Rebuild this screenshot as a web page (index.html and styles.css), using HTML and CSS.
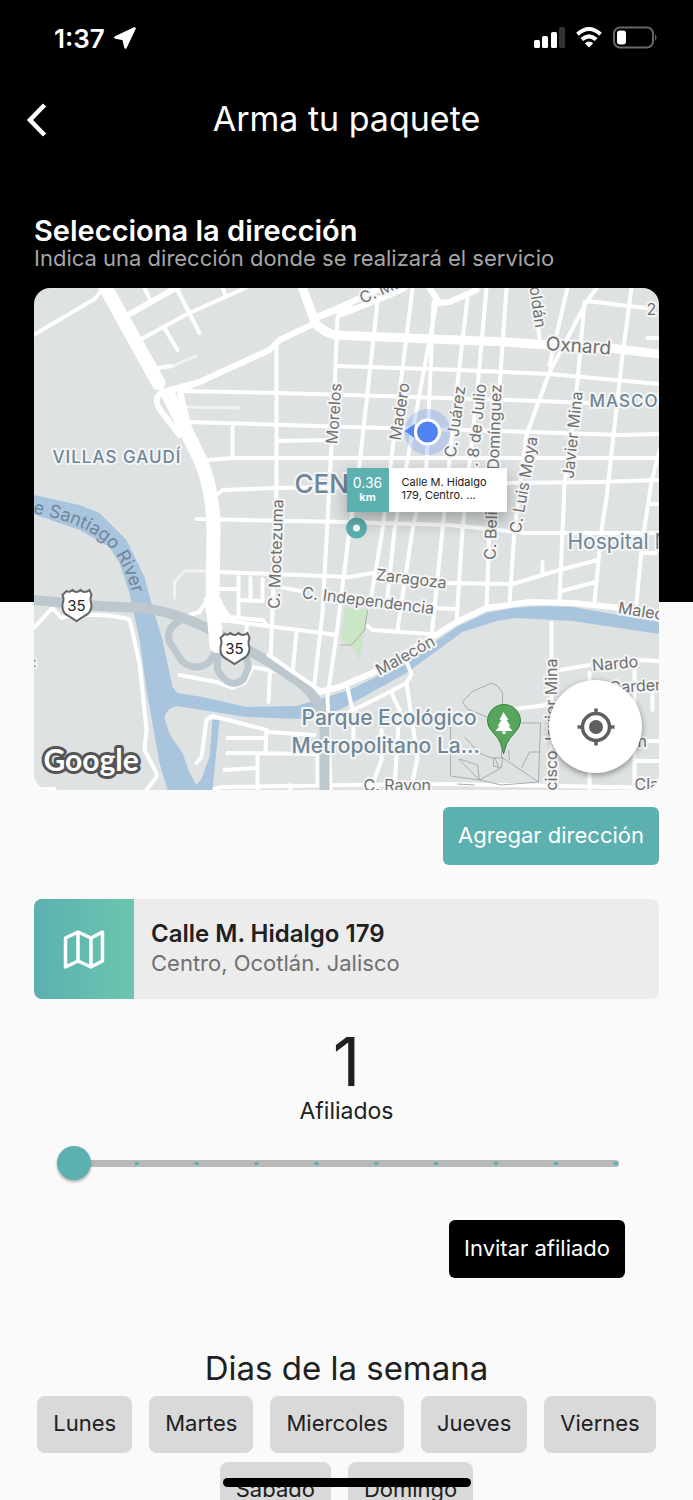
FILE: index.html
```html
<!DOCTYPE html>
<html lang="es">

<head>
    <meta charset="UTF-8">
    <meta name="viewport" content="width=device-width, initial-scale=1.0">
    <title>Arma tu paquete</title>
    <link rel="stylesheet" href="styles.css">
</head>

<body>

<div class="screen">
    <!-- Status bar -->
    <div class="status-bar">
        <div class="status-left">
            <span>1:37</span>
            <svg width="22" height="22" viewBox="0 0 22 22"><path d="M20.500 1.500L1.500 10.500 9.500 12 11.500 20.500Z" fill="#fff" stroke="#fff" stroke-width="2.500" stroke-linejoin="round"/></svg>
        </div>
        <svg class="status-icons" width="124" height="24" viewBox="0 0 124 24">
            <g fill="#fff">
                <rect x="0" y="14" width="6" height="8" rx="1.500"/>
                <rect x="8" y="10" width="6" height="12" rx="1.500"/>
                <rect x="17" y="6" width="6" height="16" rx="1.500"/>
                <rect x="25" y="1" width="6" height="21" rx="1.500" fill="#333"/>
                <path d="M55 21.500L50.800 17.200Q55 14 59.200 17.200Z"/>
            </g>
            <g fill="none" stroke="#fff" stroke-width="4">
                <path d="M43.500 8.200Q55-2.200 66.500 8.200"/>
                <path d="M47.800 13.500Q55 7.200 62.200 13.500"/>
            </g>
            <rect x="80" y="1.500" width="39" height="20" rx="6" fill="none" stroke="#666" stroke-width="2"/>
            <rect x="83" y="4.500" width="9" height="14" rx="3" fill="#fff"/>
            <path d="M121 8q3 3.500 0 7z" fill="#666"/>
        </svg>
    </div>

    <header class="header">
        <button class="back-button" aria-label="Volver">
            <svg width="22" height="34" viewBox="0 0 22 34"><path d="M18.500 2L4 17 18.500 32" fill="none" stroke="#fff" stroke-width="4.500"/></svg>
        </button>
        <h1>Arma tu paquete</h1>
    </header>

    <main class="content">
        <h2>Selecciona la dirección</h2>
        <p class="subtitle">Indica una dirección donde se realizará el servicio</p>

        <!-- Map -->
        <div class="map">
            <svg class="map-canvas" viewBox="34 288 626 502" preserveAspectRatio="xMidYMid slice">
                <rect x="34" y="288" width="626" height="502" fill="#dee2e3"/>
                <path fill="#cbe6c6" d="M345 607L368 610 365 630 360 660 352 645 342 640Z"/>
                <path fill="#a9c5dd" d="M34 495L80 505 100 513 127 540 145 577 153 607 163 640 173 687 178 693 203 697 247 707 297 706 350 690 407 662 457 627 487 613 513 608 543 606 573 607 660 622V634L573 621 517 618 497 621 463 632 407 673 340 710 300 719 247 717 177 706Q167 708 165 718L170 734 183 753 190 773 197 785 202 779 210 757 213 720H220L213 790H168L160 763 147 690 140 640 130 593 120 563 110 547 80 530 34 514Z"/>

                <!-- streets -->
                <g class="road">
                    <path d="M34 335L95 299 103 290M145 288L151 301M177 288L200 333M165 328L178 350M223 288L226 295M158 368L173 366M140 340L190 313 246 288"/>
                    <path d="M337 366L460 370 550 374 660 384M180 391L277 393 350 395 540 401 590 403M188 422L350 427 500 431 620 435 660 434M208 460L233 458H660M278 441L327 440M217 495L223 490 277 488 350 487M507 483L600 482 660 480M197 519L350 522 450 525 527 533H660M233 427V458"/>
                    <path d="M277 345V488L273 613 269 702M338 317L335 390 332 445 327 540 323 613 315 683M378 302L360 465 350 530 337 635 328 697 331 790"/>
                    <path d="M413 288L392 458 383 530 370 607M437 302L407 465 395 530 388 597M434 302L427 465 413 530 398 630M468 298L457 392 443 530 432 637M487 288L478 388 463 530 457 622M507 288L500 388 490 530 487 608"/>
                    <path d="M568 288L550 365M597 288L587 302 550 372 527 435 515 530 510 603M585 302L578 382 565 485 560 600M632 288L623 355 607 498 602 530 595 602M660 450L652 482 643 540 637 603M587 301L647 308M538 322L540 338M648 338H660M650 504H660M645 553H656"/>
                    <path d="M220 572L350 577 373 573M447 583L513 584 560 570 598 560M543 562V573M562 591L597 582M433 608L457 609M239 577V617M220 589H239M240 600L263 601M251 578V598M263 579V600M280 587L302 591M190 615L200 612 208 600M220 602L230 617 263 620 268 626M222 620L337 635M247 624V640M297 632L293 673M368 626L373 630 430 634"/>
                    <path d="M34 628L53 608 62 618 73 615H100Q126 617 130 620L133 632 140 663 147 730 145 750 157 773V777L147 790M180 675L217 682 233 688 245 683 253 667 280 672M197 763L202 757 207 720 213 716 267 730 266 752M268 732L315 735M228 738H266M228 753L318 754M225 770L257 768M258 755V790M215 789L223 787 350 785 450 784 660 788M291 785V790M318 754V784M34 789H55"/>
                    <path d="M348 688L353 710M407 662L412 674 407 683 390 692 340 717M407 683L418 757 412 787M392 693L400 710 395 787M354 724V744M382 730V760L372 787M552 623V790M560 670L590 665M637 660L660 661M507 710L547 705M635 667V790M590 673V790M653 692V710M645 741H660M635 761H660"/>
                </g>
                <g class="road-minor">
                    <path d="M173 366L197 356M185 407L240 408M175 598V582L185 571 220 571"/>
                </g>
                <g class="road-medium">
                    <path d="M125 317L180 286M350 305L317 318M317 317L350 303 385 286M340 315L390 295 405 288M430 288L440 303 450 302 477 290M316 323L280 340 270 350 200 382 163 392Q153 398 160 409L180 435M200 382L180 390 190 430M172 392L190 430"/>
                    <path d="M280 672L320 692 340 687 373 673 433 637 457 622 487 608 530 602 573 603 623 608 660 618"/>
                </g>
                <path class="highway" d="M34 600L100 606 143 608Q178 612 217 633L263 658 297 680Q325 700 325 730V790"/>
                <g class="ramp">
                    <path d="M180 621Q166 628 170 642L183 662Q197 672 210 662L218 648V670Q230 691 244 679L249 667 246 653"/>
                </g>
                <path class="road-large" d="M303 288L316 323Q322 331 335 335L507 342 547 345 610 348 660 354"/>
                <path class="road-medium" d="M207 600L212 620M219 600L225 620"/>
                <path class="avenue" d="M103 282L159 383"/>
                <path class="avenue" d="M169 395L200 458Q214 490 214 530L213 600 217 646"/>
                <path class="road" d="M269 655L295 673 320 690"/>

                <!-- footpaths of the park -->
                <g class="footpath">
                    <path d="M463 702L472 692 492 683 498 686 503 693V706M463 702L468 709 490 718M451 724V776L480 780 502 785 539 782 541 723H520M465 737L480 753 492 758H502V750M495 757L500 769 480 780 478 765 460 759M502 757L539 782M522 768L530 752H541M459 759L480 780M509 750L510 760M368 610L365 630 352 645H341M458 784L475 785M494 758V766L502 768 503 758"/>
                </g>

                <!-- labels -->
                <g class="label">
                    <text class="center" transform="translate(340 414) rotate(-86)">Morelos</text>
                    <text transform="translate(401 441) rotate(-81)">Madero</text>
                    <text transform="translate(363 304) rotate(-24)">C. Ma</text>
                    <text transform="translate(530 287) rotate(82)">oldán</text>
                    <text x="647" y="315">2</text>
                    <text class="large" transform="translate(546 350) rotate(4)">Oxnard</text>
                    <text transform="translate(456 458) rotate(-82)">C. Juárez</text>
                    <text transform="translate(478 467) rotate(-84)">. 8 de Julio</text>
                    <text transform="translate(496 560) rotate(-88)">C. Belisario Domínguez</text>
                    <text transform="translate(521 534) rotate(-80)">C. Luis Moya</text>
                    <text transform="translate(574 479) rotate(-84)">Javier Mina</text>
                    <text transform="translate(280 609) rotate(-88)">C. Moctezuma</text>
                    <text transform="translate(376 580) rotate(7)">Zaragoza</text>
                    <text transform="translate(302 598) rotate(7)">C. Independencia</text>
                    <text transform="translate(380 676) rotate(-29)">Malecón</text>
                    <text transform="translate(618 613) rotate(9)">Malecón</text>
                    <text transform="translate(593 671) rotate(-5)">Nardo</text>
                    <text transform="translate(610 693) rotate(-3)">Gardenia</text>
                    <text x="638" y="747">n</text>
                    <text x="364" y="791">C. Rayon</text>
                    <text x="635" y="790">Clavel</text>
                    <text transform="translate(557 800) rotate(-90)">ncisco Javier Mina</text>
                </g>
                <g class="label area">
                    <text class="spaced" x="53" y="463">VILLAS GAUDÍ</text>
                    <text class="spaced" x="590" y="407">MASCOTA</text>
                    <text class="district" x="295" y="493">CEN</text>
                    <text class="place" x="568" y="549">Hospital M</text>
                    <text class="place bold" x="302" y="725">Parque Ecológico</text>
                    <text class="place bold" x="292" y="753">Metropolitano La...</text>
                    <text x="28" y="668">c</text>
                </g>
                <path id="riverLabel" d="M33 513Q88 523 112 549 127 567 136 605" fill="none"/>
                <text class="river-name"><textPath href="#riverLabel">e Santiago River</textPath></text>

                <!-- route shields -->
                <g class="shield">
                    <path id="shield" d="M67 591Q70 593 73 590 77 594 81 590 85 594 90 590L92 595Q90 599 92 605 92 613 85 616L77 621 69 616Q62 613 63 604 65 599 63 595Z"/>
                    <text x="77" y="611">35</text>
                    <use href="#shield" x="158" y="43"/>
                    <text x="235" y="654">35</text>
                </g>

                <!-- park pin -->
                <path d="M504 754L501 743Q499 738 493 732 488 727 488 721A16 16 0 0 1 521 721Q521 727 515 733 510 738 507 744Z" fill="#58a55c" stroke="#39843d"/>
                <path d="M504 712L509 720H507L511 726H509L513 731H506V734H503V731H496L500 726H498L502 720H500Z" fill="#fff"/>

                <!-- current location -->
                <circle cx="428" cy="432" r="23" fill="#5488f0" opacity=".25"/>
                <path d="M405 431L415 424V438Z" fill="#5488f0"/>
                <circle cx="428" cy="432" r="12" fill="#5083ee" stroke="#fff" stroke-width="3"/>

                <!-- selected address -->
                <circle cx="357" cy="528" r="7" fill="#fff" stroke="#5cb0b0" stroke-width="7"/>
                <text class="google" x="44" y="771">Google</text>
            </svg>
            <div class="callout">
                <div class="distance">0.36<strong>km</strong></div>
                <div class="callout-text">Calle M. Hidalgo<br>179, Centro. ...</div>
            </div>
            <button class="locate-button" aria-label="Mi ubicación">
                <svg width="38" height="38" viewBox="0 0 38 38"><g fill="none" stroke="#5f5f5f" stroke-width="3.500"><circle cx="19" cy="19" r="13.500"/><path d="M19 0.500V6M19 32V37.500M0.500 19H6M32 19H37.500"/></g><circle cx="19" cy="19" r="7" fill="#5f5f5f"/></svg>
            </button>
        </div>

        <button class="button add-button">Agregar dirección</button>

        <!-- Address card -->
        <div class="address-card">
            <div class="address-icon">
                <svg width="42" height="42" viewBox="0 0 42 42"><path d="M2.500 10L15 4 28 10 39.500 4V33L28 39 15 33 2.500 39ZM15 4V33M28 10V39" fill="none" stroke="#fff" stroke-width="3.500" stroke-linejoin="round"/></svg>
            </div>
            <div class="address-text">
                <h3>Calle M. Hidalgo 179</h3>
                <p>Centro, Ocotlán. Jalisco</p>
            </div>
        </div>

        <!-- Affiliates -->
        <section class="affiliates">
            <output class="count" for="affiliates">1</output>
            <label for="affiliates">Afiliados</label>
            <input class="slider" type="range" id="affiliates" min="1" max="10" value="1">
            <button class="button invite-button">Invitar afiliado</button>
        </section>

        <h2 class="days-title">Dias de la semana</h2>
        <div class="days">
            <button>Lunes</button>
            <button>Martes</button>
            <button>Miercoles</button>
            <button>Jueves</button>
            <button>Viernes</button>
            <button>Sabado</button>
            <button>Domingo</button>
        </div>
    </main>
    <div class="home-indicator"></div>
</div>

<script>
    const slider = document.getElementById('affiliates');
    slider.addEventListener('input', () => {
        document.querySelector('.count').textContent = slider.value;
    });
</script>

</body>

</html>
```
FILE: styles.css
```css
* {
    box-sizing: border-box;
}

body {
    margin: 0;
    background-color: #fafafa;
    color: #202020;
    font-family: Inter, "Liberation Sans", sans-serif;
    font-size: 22px;
}

h1, h2, h3, p {
    margin: 0;
    font-weight: 400;
}

button {
    font: inherit;
    color: inherit;
    border: 0;
    cursor: pointer;
}

svg {
    display: block;
}

.screen {
    height: 100vh;
    overflow: hidden;
    background: linear-gradient(#000 602px, #fafafa 602px);
}

.status-bar {
    display: flex;
    justify-content: space-between;
    align-items: center;
    height: 76px;
    padding: 0 35px 0 54px;
    color: #fff;
    font-size: 26px;
    font-weight: 600;
}

.status-left {
    display: flex;
    align-items: center;
    gap: 9px;
}

.header {
    display: grid;
    grid-template-columns: 60px 1fr 60px;
    align-items: center;
    height: 88px;
    color: #fff;
}

.header h1 {
    font-size: 34px;
    text-align: center;
    padding-bottom: 3px;
}

.back-button {
    background: none;
    padding: 0 0 0 26px;
}

.content {
    padding: 50px 34px 0;
}

.content h2 {
    color: #fff;
    font-size: 29px;
    font-weight: 600;
    line-height: 34px;
}

.subtitle {
    color: #a6a6a6;
    line-height: 20px;
    margin-bottom: 20px;
}

.map {
    position: relative;
    height: 502px;
    border-radius: 16px;
    overflow: hidden;
}

.map-canvas {
    width: 100%;
    height: 100%;
}

.road, .road-minor, .road-medium, .road-large, .avenue, .highway, .ramp {
    fill: none;
    stroke: #fff;
    stroke-width: 4px;
    stroke-linejoin: round;
    stroke-linecap: round;
}

.road-minor {
    stroke: #f2f2f2;
    stroke-width: 3px;
}

.road-medium {
    stroke-width: 6px;
}

.road-large {
    stroke-width: 9px;
}

.avenue {
    stroke-width: 14px;
}

.highway {
    stroke: #bcc8cd;
    stroke-width: 10px;
}

.ramp {
    stroke: #bcc8cd;
    stroke-width: 7px;
}

.footpath {
    fill: none;
    stroke: #a9adae;
    stroke-width: 1px;
}

.label {
    fill: #6f6f6f;
    font-size: 16px;
    stroke: #f4f5f5;
    stroke-width: 4px;
    stroke-linejoin: round;
    paint-order: stroke;
}

.label .center {
    text-anchor: middle;
}

.label .large {
    font-size: 19px;
}

.area {
    fill: #6f8698;
}

.label .spaced {
    font-size: 17px;
    letter-spacing: 1px;
    font-weight: 500;
}

.label .district {
    font-size: 26px;
    font-weight: 500;
}

.label .place {
    font-size: 21px;
}

.label .bold {
    font-weight: 500;
}

.river-name {
    fill: #6f8698;
    font-size: 18px;
}

.shield {
    fill: #fff;
    stroke: #666;
    stroke-width: 2px;
}

.shield text {
    fill: #222;
    stroke: none;
    font-size: 15px;
    text-anchor: middle;
}

.google {
    font-family: Lato, sans-serif;
    font-size: 30px;
    font-weight: 700;
    fill: #fff;
    stroke: #555;
    stroke-width: 6px;
    stroke-linejoin: round;
    paint-order: stroke;
}

.callout {
    position: absolute;
    top: 180px;
    left: 50%;
    display: flex;
    width: 160px;
    height: 44px;
    background-color: #fff;
    box-shadow: 0 8px 18px rgba(0, 0, 0, 0.3);
}

.distance {
    display: flex;
    flex-direction: column;
    justify-content: center;
    align-items: center;
    width: 42px;
    background-color: #5cb0b0;
    color: #fff;
    font-size: 14px;
    line-height: 15px;
}

.distance strong {
    font-size: 11px;
}

.callout-text {
    padding: 8px 0 0 13px;
    font-size: 11px;
    line-height: 13px;
}

.locate-button {
    position: absolute;
    right: 17px;
    bottom: 17px;
    display: flex;
    justify-content: center;
    align-items: center;
    width: 93px;
    height: 93px;
    padding: 0;
    border-radius: 50%;
    background-color: #fff;
    box-shadow: 0 2px 6px rgba(0, 0, 0, 0.4);
}

.button {
    display: block;
    height: 58px;
    padding: 0 15px 2px;
    border-radius: 6px;
    color: #fff;
}

.add-button {
    margin: 17px 0 34px auto;
    background-color: #5cb0b0;
}

.address-card {
    display: flex;
    height: 100px;
    border-radius: 8px;
    background-color: #ececec;
    overflow: hidden;
}

.address-icon {
    display: flex;
    justify-content: center;
    align-items: center;
    width: 100px;
    background: linear-gradient(to right, #5cb0b0, #6ac6ae);
}

.address-text {
    padding: 20px 17px;
}

.address-text h3 {
    font-size: 24px;
    font-weight: 600;
    line-height: 30px;
}

.address-text p {
    color: #707070;
    line-height: 28px;
}

.affiliates {
    display: flex;
    flex-direction: column;
    align-items: center;
    padding: 26px 34px 0 23px;
}

.affiliates .count, .affiliates label {
    padding-left: 11px;
}

.count {
    font-size: 68px;
    line-height: 72px;
}

.affiliates label {
    font-size: 23px;
    line-height: 28px;
}

/* Slider with a dot on every step */
.slider {
    appearance: none;
    width: calc(100% - 6px);
    height: 34px;
    margin: 21px 6px 40px 0;
    background: none;
}

.slider::-webkit-slider-runnable-track {
    height: 7px;
    border-radius: 4px;
    background: radial-gradient(circle, #5cb0b0 2px, transparent 2px) -10px 0 / calc((100% - 23px) / 9) 100% #b8b8b8;
}

.slider::-webkit-slider-thumb {
    appearance: none;
    width: 34px;
    height: 34px;
    margin-top: -14px;
    border-radius: 50%;
    background-color: #5cb0b0;
    box-shadow: 0 2px 3px rgba(0, 0, 0, 0.3);
}

.invite-button {
    align-self: flex-end;
    background-color: #000;
}

.content .days-title {
    margin: 70px 0 8px;
    color: #202020;
    font-size: 33px;
    font-weight: 400;
    line-height: 40px;
    text-align: center;
}

.days {
    display: flex;
    flex-wrap: wrap;
    justify-content: center;
    gap: 9px 17px;
}

.days button {
    height: 57px;
    padding: 0 16px 4px;
    border-radius: 8px;
    background-color: #d9d9d9;
}

.home-indicator {
    position: fixed;
    left: 50%;
    bottom: 13px;
    width: 248px;
    height: 9px;
    margin-left: -124px;
    border-radius: 5px;
    background-color: #000;
}
```
